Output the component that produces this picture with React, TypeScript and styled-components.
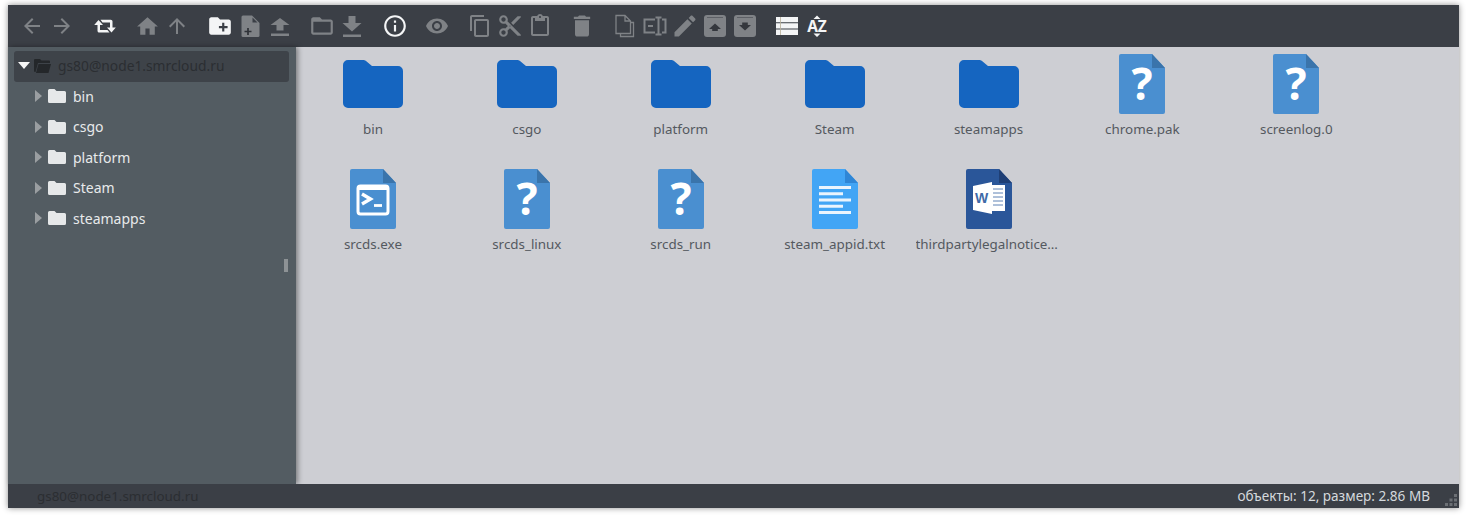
import React from "react";
import styled, { createGlobalStyle } from "styled-components";

const GlobalStyle = createGlobalStyle`
  html, body {
    margin: 0;
    padding: 0;
    background: #fff;
  }
  body {
    font-family: "Noto Sans", "Open Sans", sans-serif;
    font-size: 14px;
  }
`;

const Page = styled.div`
  width: 1471px;
  height: 517px;
  padding: 5px 12px 9px 8px;
  box-sizing: border-box;
  overflow: hidden;
`;

const Manager = styled.div`
  height: 503px;
  display: flex;
  flex-direction: column;
  box-shadow: 0 0 6px rgba(0, 0, 0, 0.45);
`;

const Toolbar = styled.div`
  height: 42px;
  flex: none;
  display: flex;
  align-items: center;
  padding-left: 9px;
  gap: 12.5px;
  background: #3b3f46;
`;

const ToolGroup = styled.div`
  display: flex;
  align-items: center;
`;

const ToolButton = styled.div<{ $on?: boolean }>`
  width: 30px;
  height: 30px;
  display: flex;
  align-items: center;
  justify-content: center;
  color: ${(p) => (p.$on ? "#f4f5f6" : "#7f8286")};
  svg {
    display: block;
    fill: currentColor;
  }
`;

const Middle = styled.div`
  flex: 1;
  min-height: 0;
  display: flex;
`;

const Sidebar = styled.div`
  position: relative;
  width: 288px;
  flex: none;
  padding: 4px 7px 0 6px;
  box-sizing: border-box;
  background: #535c62;
  box-shadow: 2px 0 5px rgba(0, 0, 0, 0.4);
  z-index: 1;
`;

const RootRow = styled.div`
  height: 31px;
  box-sizing: border-box;
  display: flex;
  align-items: center;
  padding: 0 0 2px 4px;
  border-radius: 3px;
  background: #3e4349;
  color: #2b2e32;
  font-size: 13.8px;
`;

const TreeRow = styled.div`
  height: 30.5px;
  box-sizing: border-box;
  display: flex;
  align-items: center;
  padding: 0 0 2px 21px;
  color: #e8eaeb;
  font-size: 14px;
`;

const Caret = styled.span<{ $open?: boolean }>`
  width: 0;
  height: 0;
  flex: none;
  ${(p) =>
    p.$open
      ? `
    border-left: 6px solid transparent;
    border-right: 6px solid transparent;
    border-top: 7px solid #f6f6f6;
    margin-right: 4px;
  `
      : `
    border-top: 6px solid transparent;
    border-bottom: 6px solid transparent;
    border-left: 7px solid #9a9ea1;
    margin-right: 6px;
  `}
`;

const TreeIcon = styled.svg`
  flex: none;
  display: block;
  margin-right: 7px;
`;

const ResizeGrip = styled.div`
  position: absolute;
  left: 276px;
  top: 212px;
  width: 4px;
  height: 13px;
  background: #8d9295;
`;

const Content = styled.div`
  flex: 1;
  min-width: 0;
  display: flex;
  flex-wrap: wrap;
  align-content: flex-start;
  padding-top: 7px;
  background: #cdced3;
`;

const Cell = styled.div`
  width: 153.9px;
  height: 115px;
  display: flex;
  flex-direction: column;
  align-items: center;
  color: #54595f;
  font-size: 13.4px;
`;

const IconBox = styled.div`
  height: 60px;
  display: flex;
  align-items: center;
  justify-content: center;
  svg {
    display: block;
  }
`;

const Label = styled.div`
  width: 146px;
  margin-top: 5px;
  line-height: 20px;
  text-align: center;
  white-space: nowrap;
  overflow: hidden;
  text-overflow: ellipsis;
`;

const StatusBar = styled.div`
  position: relative;
  height: 24px;
  box-sizing: border-box;
  flex: none;
  display: flex;
  align-items: center;
  justify-content: space-between;
  padding: 0 29px 1px;
  background: #3b3f46;
  font-size: 13.4px;
  z-index: 2;
`;

const StatusPath = styled.span`
  color: #2b2e32;
`;

const StatusInfo = styled.span`
  color: #d5d9dd;
  font-size: 13.55px;
`;

const Dots = styled.svg`
  position: absolute;
  right: 2px;
  bottom: 2px;
  display: block;
`;

type IconProps = { size?: number };

const mat = (d: string, defaultSize = 24) =>
  function MatIcon({ size = defaultSize }: IconProps) {
    return (
      <svg width={size} height={size} viewBox="0 0 24 24">
        <path d={d} />
      </svg>
    );
  };

const Back = mat("M20 11H7.83l5.59-5.59L12 4l-8 8 8 8 1.41-1.41L7.83 13H20v-2z");
const Forward = mat("M12 4l-1.41 1.41L16.17 11H4v2h12.17l-5.58 5.59L12 20l8-8z");
const Home = mat("M10 20v-6h4v6h5v-8h3L12 3 2 12h3v8z", 25);
const Up = mat("M4 12l1.41 1.41L11 7.83V20h2V7.83l5.58 5.59L20 12l-8-8-8 8z");
const NewFolder = mat(
  "M20 6h-8l-2-2H4c-1.11 0-1.99.89-1.99 2L2 18c0 1.11.89 2 2 2h16c1.11 0 2-.89 2-2V8c0-1.11-.89-2-2-2zm-1 8h-3v3h-2v-3h-3v-2h3V9h2v3h3v2z",
  26,
);
const Upload = mat("M8.5 16.5h7V11h6L12 4 2.5 11h6zM3 19.500h18V22H3z");
const FolderOutline = mat(
  "M20 6h-8l-2-2H4c-1.1 0-1.99.9-1.99 2L2 18c0 1.1.9 2 2 2h16c1.1 0 2-.9 2-2V8c0-1.1-.9-2-2-2zm0 12H4V8h16v10z",
  26,
);
const Download = mat("M8.5 2h7v7h6L12 17.5 2.5 9h6zM3 20.500h18V23H3z");
const Info = mat(
  "M11 7h2v2h-2zm0 4h2v6h-2zm1-9C6.48 2 2 6.48 2 12s4.48 10 10 10 10-4.48 10-10S17.52 2 12 2zm0 18c-4.41 0-8-3.59-8-8s3.59-8 8-8 8 3.59 8 8-3.59 8-8 8z",
  26,
);
const Eye = mat(
  "M12 4.5C7 4.5 2.73 7.61 1 12c1.73 4.39 6 7.5 11 7.5s9.27-3.11 11-7.5c-1.73-4.39-6-7.5-11-7.5zM12 17c-2.76 0-5-2.24-5-5s2.24-5 5-5 5 2.24 5 5-2.24 5-5 5zm0-8c-1.66 0-3 1.34-3 3s1.34 3 3 3 3-1.34 3-3-1.34-3-3-3z",
);
const Copy = mat(
  "M16 1H4c-1.1 0-2 .9-2 2v14h2V3h12V1zm3 4H8c-1.1 0-2 .9-2 2v14c0 1.1.9 2 2 2h11c1.1 0 2-.9 2-2V7c0-1.1-.9-2-2-2zm0 16H8V7h11v14z",
);
const Cut = mat(
  "M9.64 7.64c.23-.5.36-1.05.36-1.64 0-2.21-1.79-4-4-4S2 3.79 2 6s1.79 4 4 4c.59 0 1.14-.13 1.64-.36L10 12l-2.36 2.36C7.14 14.13 6.59 14 6 14c-2.21 0-4 1.79-4 4s1.79 4 4 4 4-1.79 4-4c0-.59-.13-1.14-.36-1.64L12 14l7 7h3v-1L9.64 7.64zM6 8c-1.1 0-2-.89-2-2s.9-2 2-2 2 .89 2 2-.9 2-2 2zm0 12c-1.1 0-2-.89-2-2s.9-2 2-2 2 .89 2 2-.9 2-2 2zm6-7.5c-.28 0-.5-.22-.5-.5s.22-.5.5-.5.5.22.5.5-.22.5-.5.5zM19 3l-6 6 2 2 7-7V3h-3z",
  26,
);
const Paste = mat(
  "M19 2h-4.18C14.4.84 13.3 0 12 0c-1.3 0-2.4.84-2.82 2H5c-1.1 0-2 .9-2 2v16c0 1.1.9 2 2 2h14c1.1 0 2-.9 2-2V4c0-1.1-.9-2-2-2zm-7 0c.55 0 1 .45 1 1s-.45 1-1 1-1-.45-1-1 .45-1 1-1zm7 18H5V4h2v3h10V4h2v16z",
);
const Trash = mat("M6 19c0 1.1.9 2 2 2h8c1.1 0 2-.9 2-2V7H6v12zM19 4h-3.5l-1-1h-5l-1 1H5v2h14V4z", 28);
const Edit = mat(
  "M3 17.25V21h3.75L17.81 9.94l-3.75-3.75L3 17.25zM20.71 7.04c.39-.39.39-1.02 0-1.41l-2.34-2.34c-.39-.39-1.02-.39-1.41 0l-1.83 1.83 3.75 3.75 1.83-1.83z",
  28,
);

const NewFile = () => (
  <svg width="24" height="24" viewBox="0 0 24 24">
    <path d="M5 1.500h9l7.500 7.500v12.500a1.500 1.500 0 0 1-1.500 1.500H5a1.500 1.500 0 0 1-1.500-1.500V3A1.500 1.500 0 0 1 5 1.500z" />
    <path d="M14.500 3.500 19.500 8.500h-5z" fill="#3b3f46" />
    <path d="M6.500 17.500h7M10 14v7" stroke="#2f3238" strokeWidth="1.700" fill="none" />
  </svg>
);

const Retweet = () => (
  <svg width="24" height="24" viewBox="0 0 24 24">
    <path d="M5.5 6 10 11H7v5h7.5l2 2.6H6.3c-1 0-1.8-.8-1.8-1.8V11H1.2z" />
    <path d="M18.5 18.4 14 13.4h3v-5H9.5l-2-2.6h10.2c1 0 1.800.8 1.800 1.800v5.800h3.300z" />
  </svg>
);

const Duplicate = () => (
  <svg width="20" height="24" viewBox="0 0 20 24">
    <path
      d="M1 1.500h9l5.500 5.500v12.500H1zM10 1.500V7h5.500M15.500 8.500h3V22.500H5.500v-3"
      fill="none"
      stroke="currentColor"
      strokeWidth="1.300"
    />
  </svg>
);

const Rename = () => (
  <svg width="24" height="24" viewBox="0 0 24 24">
    <path
      d="M12 5.500H1.500v13H12M19 5.500h3.500v13H19M5 12h5"
      fill="none"
      stroke="currentColor"
      strokeWidth="2"
    />
    <path
      d="M12.500 3.500h6M12.500 20.500h6M15.500 3.500v17"
      fill="none"
      stroke="currentColor"
      strokeWidth="2"
    />
  </svg>
);

const BoxArrow = ({ up }: { up?: boolean }) => (
  <svg width="22" height="22" viewBox="0 0 22 22">
    <path d="M3 0h16a3 3 0 0 1 3 3v16a3 3 0 0 1-3 3H3a3 3 0 0 1-3-3V3a3 3 0 0 1 3-3z" />
    <path d="M3 2h16v.8H3z" fill="#53575d" />
    {up ? (
      <path d="M11 8.500l6 5.500h-3.200v2H8.200v-2H5z" fill="#34373d" />
    ) : (
      <path d="M8.200 7.500h5.600v2.500H17l-6 5.500L5 10h3.200z" fill="#34373d" />
    )}
  </svg>
);

const ListIcon = () => (
  <svg width="24" height="18" viewBox="0 0 24 18">
    <path d="M1 0h22v5.200H1zM1 6.200h22v5.200H1zM1 12.400h22V18H1z" />
    <path d="M5.500 0v18" stroke="#b8ae98" strokeWidth="0.800" />
  </svg>
);

const SortIcon = () => (
  <svg width="22" height="24" viewBox="0 0 22 24">
    <path d="M11 1.500l3.500 3.500h-7zM11 23l-3.500-3.500h7z" />
    <text x="11" y="17.500" textAnchor="middle" fontFamily="'Noto Sans', sans-serif" fontSize="15.500" fontWeight="700">
      AZ
    </text>
  </svg>
);

const toolGroups: { Icon: React.ComponentType<any>; on?: boolean; props?: object }[][] = [
  [{ Icon: Back }, { Icon: Forward }],
  [{ Icon: Retweet, on: true }],
  [{ Icon: Home }, { Icon: Up }],
  [{ Icon: NewFolder, on: true }, { Icon: NewFile }, { Icon: Upload }],
  [{ Icon: FolderOutline }, { Icon: Download }],
  [{ Icon: Info, on: true }],
  [{ Icon: Eye }],
  [{ Icon: Copy }, { Icon: Cut }, { Icon: Paste }],
  [{ Icon: Trash }],
  [
    { Icon: Duplicate },
    { Icon: Rename },
    { Icon: Edit },
    { Icon: BoxArrow, props: { up: true } },
    { Icon: BoxArrow },
  ],
  [{ Icon: ListIcon, on: true }, { Icon: SortIcon, on: true }],
];

const FolderBig = () => (
  <svg width="60" height="48" viewBox="0 0 60 48">
    <path
      d="M5 0h15c1.500 0 2.600.5 3.600 1.500L29 6h26a5 5 0 0 1 5 5v32a5 5 0 0 1-5 5H5a5 5 0 0 1-5-5V5a5 5 0 0 1 5-5z"
      fill="#1565c0"
    />
  </svg>
);

const FileShape = ({ color, fold, children }: { color: string; fold: string; children?: React.ReactNode }) => (
  <svg width="46" height="60" viewBox="0 0 46 60">
    <path d="M2 0h31l13 14v44a2 2 0 0 1-2 2H2a2 2 0 0 1-2-2V2a2 2 0 0 1 2-2z" fill={color} />
    <path d="M33 0l13 14H33z" fill={fold} />
    {children}
  </svg>
);

const UnknownFile = () => (
  <FileShape color="#4a8fd0" fold="#3a74ab">
    <text x="23" y="46" textAnchor="middle" fontFamily="'Noto Sans', sans-serif" fontSize="44" fontWeight="700" fill="#fff">
      ?
    </text>
  </FileShape>
);

const ExeFile = () => (
  <FileShape color="#4a8fd0" fold="#3a74ab">
    <rect x="8" y="17" width="30" height="28" rx="2.500" fill="none" stroke="#fff" strokeWidth="3" />
    <rect x="8" y="17" width="30" height="4" fill="#fff" />
    <path d="M12 25l8.500 5-8.500 5" fill="none" stroke="#fff" strokeWidth="3.400" />
    <path d="M24 36.500h8" stroke="#fff" strokeWidth="2.800" />
  </FileShape>
);

const TextFile = () => (
  <FileShape color="#42a5f5" fold="#2f86d6">
    <path
      d="M7 18.500h32M7 24.700h24M7 31h32M7 37.300h24M7 43.500h32"
      stroke="#eaf4fd"
      strokeWidth="3"
    />
  </FileShape>
);

const WordFile = () => (
  <FileShape color="#2a5699" fold="#1f3f75">
    <path d="M7 17l19-4v32l-19-4z" fill="#fff" />
    <path d="M26 16h13v26H26z" fill="#fff" />
    <path
      d="M27 20h10M27 24h10M27 28h10M27 32h10M27 36h10"
      stroke="#5f82b5"
      strokeWidth="1"
    />
    <text x="15.500" y="34" textAnchor="middle" fontFamily="'Liberation Sans', sans-serif" fontSize="14" fontWeight="700" fill="#3f6aa8">
      W
    </text>
  </FileShape>
);

const files: { name: string; Icon: React.ComponentType }[] = [
  { name: "bin", Icon: FolderBig },
  { name: "csgo", Icon: FolderBig },
  { name: "platform", Icon: FolderBig },
  { name: "Steam", Icon: FolderBig },
  { name: "steamapps", Icon: FolderBig },
  { name: "chrome.pak", Icon: UnknownFile },
  { name: "screenlog.0", Icon: UnknownFile },
  { name: "srcds.exe", Icon: ExeFile },
  { name: "srcds_linux", Icon: UnknownFile },
  { name: "srcds_run", Icon: UnknownFile },
  { name: "steam_appid.txt", Icon: TextFile },
  { name: "thirdpartylegalnotices.doc", Icon: WordFile },
];

const folders = ["bin", "csgo", "platform", "Steam", "steamapps"];

export default function App() {
  return (
    <Page>
      <GlobalStyle />
      <Manager>
        <Toolbar>
          {toolGroups.map((group, i) => (
            <ToolGroup key={i}>
              {group.map(({ Icon, on, props }, j) => (
                <ToolButton key={j} $on={on}>
                  <Icon {...props} />
                </ToolButton>
              ))}
            </ToolGroup>
          ))}
        </Toolbar>
        <Middle>
          <Sidebar>
            <RootRow>
              <Caret $open />
              <TreeIcon width="17" height="14" viewBox="0 0 17 14">
                <path d="M1 0h5l1.500 1.500H15a1 1 0 0 1 1 1V4H4L1.500 13H1a1 1 0 0 1-1-1V1a1 1 0 0 1 1-1z" fill="#24272a" />
                <path d="M4.500 5H17l-2.500 9H2z" fill="#24272a" />
              </TreeIcon>
              gs80@node1.smrcloud.ru
            </RootRow>
            {folders.map((name) => (
              <TreeRow key={name}>
                <Caret />
                <TreeIcon width="18" height="14" viewBox="0 0 18 14">
                  <path d="M1.500 0h5L8.500 2h8A1.500 1.500 0 0 1 18 3.500v9a1.500 1.500 0 0 1-1.500 1.500h-15A1.500 1.500 0 0 1 0 12.500v-11A1.500 1.500 0 0 1 1.500 0z" fill="#e6e8e9" />
                </TreeIcon>
                {name}
              </TreeRow>
            ))}
            <ResizeGrip />
          </Sidebar>
          <Content>
            {files.map(({ name, Icon }) => (
              <Cell key={name}>
                <IconBox>
                  <Icon />
                </IconBox>
                <Label>{name}</Label>
              </Cell>
            ))}
          </Content>
        </Middle>
        <StatusBar>
          <StatusPath>gs80@node1.smrcloud.ru</StatusPath>
          <StatusInfo>объекты: 12, размер: 2.86 MB</StatusInfo>
          <Dots width="12" height="12" viewBox="0 0 12 12" fill="#6b6f74">
            <path d="M9 0h3v3H9zM9 4.500h3v3H9zM4.500 4.500h3v3h-3zM9 9h3v3H9zM4.500 9h3v3h-3zM0 9h3v3H0z" />
          </Dots>
        </StatusBar>
      </Manager>
    </Page>
  );
}
